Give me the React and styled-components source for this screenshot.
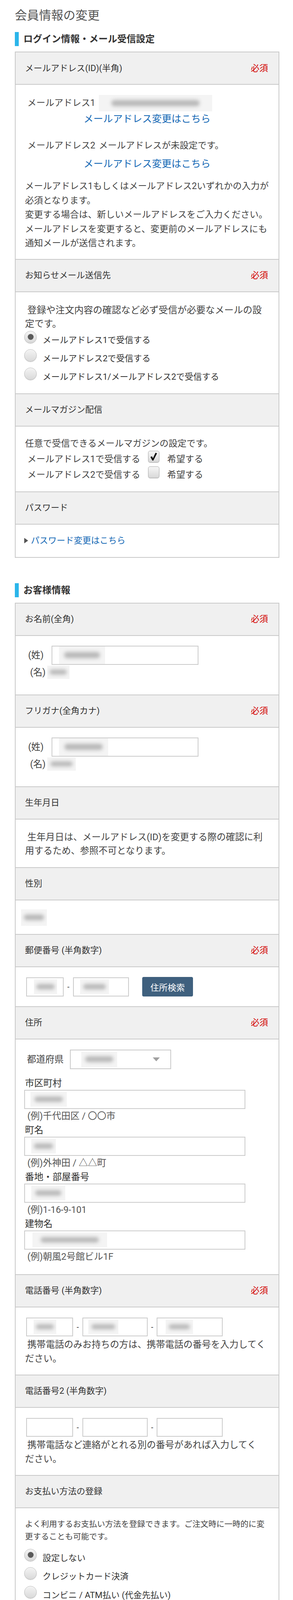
import React from 'react';
import styled, { createGlobalStyle } from 'styled-components';

const GlobalStyle = createGlobalStyle`
  html, body {
    margin: 0;
    padding: 0;
    background: #ffffff;
  }
  body {
    font-family: Roboto, "Noto Sans CJK JP", sans-serif;
    color: #333333;
  }
  * {
    box-sizing: border-box;
  }
`;

const Page = styled.div`
  width: 750px;
  padding: 20px 35px 19px 38px;
`;

const Title = styled.h1`
  margin: 0 0 22px;
  font-size: 31px;
  line-height: 40px;
  font-weight: 400;
  color: #555555;
`;

const SectionHeading = styled.h2`
  margin: ${(p) => (p.$first ? '0' : '65px')} 0 14px;
  padding-left: 12px;
  border-left: 10px solid #2bb5ea;
  font-size: 24px;
  line-height: 36px;
  font-weight: 700;
  color: #333333;
`;

const Card = styled.div`
  border: 2px solid #c9c9c9;
  background: #ffffff;
`;

const Header = styled.div`
  display: flex;
  justify-content: space-between;
  align-items: center;
  height: 85px;
  padding: 0 27px 0 24px;
  background: #f0f0f0;
  border-top: 2px solid #c9c9c9;
  border-bottom: 2px solid #c9c9c9;
  font-size: 22px;
  line-height: 30px;
  color: #333333;
  &:first-child {
    height: 83px;
    border-top: none;
  }
`;

const Required = styled.span`
  color: #d30000;
  font-size: 22px;
`;

const Body = styled.div`
  padding: ${(p) => p.$pad || '25px 12px 22px 24px'};
  font-size: 23px;
  line-height: 36px;
  color: #444444;
`;

const Text = styled.p`
  margin: ${(p) => p.$m || '0'};
  font-size: ${(p) => p.$size || 23}px;
  line-height: ${(p) => p.$lh || 36}px;
  text-indent: ${(p) => (p.$indent ? '6px' : '0')};
  color: #444444;
`;

const EmailRow = styled.div`
  display: flex;
  align-items: center;
  height: ${(p) => p.$h || 40}px;
  margin-top: ${(p) => p.$mt || 0}px;
  padding-left: 6px;
  font-size: 23px;
  color: #444444;
  white-space: nowrap;
`;

const EmailLabel = styled.span`
  margin-right: 9px;
`;

const CenterLink = styled.a`
  display: block;
  margin-top: ${(p) => p.$mt || 0}px;
  padding-right: 12px;
  text-align: center;
  font-size: 25px;
  line-height: 40px;
  color: #1468b5;
  text-decoration: none;
`;

const Blur = styled.span`
  display: inline-flex;
  align-items: center;
  justify-content: center;
  flex: none;
  width: ${(p) => p.$w}px;
  height: ${(p) => p.$h || 40}px;
  margin-left: ${(p) => p.$ml || 0}px;
  background: #f4f4f4;
  overflow: hidden;
  &::after {
    content: '';
    width: 78%;
    height: 36%;
    border-radius: 10px;
    background: #b9b9b9;
    filter: blur(5px);
  }
`;

const RadioList = styled.div`
  margin-top: ${(p) => p.$mt || 0}px;
`;

const RadioRow = styled.label`
  display: flex;
  align-items: flex-start;
  height: ${(p) => p.$h || 47}px;
`;

const RadioMark = styled.span`
  flex: none;
  display: flex;
  align-items: center;
  justify-content: center;
  width: 32px;
  height: 32px;
  margin-left: -2px;
  border-radius: 50%;
  border: 1px solid #b9b9b9;
  background: linear-gradient(#f4f4f4, #d9d9d9);
  box-shadow: inset 0 1px 1px #ffffff, 0 1px 1px rgba(0, 0, 0, 0.15);
  &::after {
    content: '';
    width: 15px;
    height: 15px;
    border-radius: 50%;
    background: ${(p) => (p.$checked ? '#5b5b5b' : 'transparent')};
  }
`;

const RadioLabel = styled.span`
  margin-left: 15px;
  font-size: 22px;
  line-height: 47px;
  color: #333333;
  white-space: pre;
`;

const CheckList = styled.div`
  margin-top: 2px;
`;

const CheckRow = styled.div`
  display: flex;
  align-items: center;
  height: 40px;
  padding-left: 6px;
  font-size: 23px;
  color: #444444;
  white-space: nowrap;
`;

const CheckMark = styled.span`
  flex: none;
  align-self: flex-start;
  display: flex;
  align-items: center;
  justify-content: center;
  width: 29px;
  height: 30px;
  margin: -2px 20px 0 20px;
  border: 1px solid #a9a9a9;
  border-radius: 5px;
  background: linear-gradient(#f6f6f6, #d8d8d8);
  box-shadow: 0 1px 1px rgba(0, 0, 0, 0.15);
`;

const PlainLink = styled.a`
  display: flex;
  align-items: center;
  gap: 7px;
  margin-left: -2px;
  font-size: 22px;
  line-height: 40px;
  color: #1468b5;
  text-decoration: none;
`;

const Triangle = styled.span`
  width: 0;
  height: 0;
  border-top: 7px solid transparent;
  border-bottom: 7px solid transparent;
  border-left: 10px solid #555555;
`;

const InlineRow = styled.div`
  display: flex;
  align-items: center;
  height: ${(p) => p.$h || 49}px;
  padding-left: ${(p) => p.$pl || 0}px;
  white-space: nowrap;
`;

const NameLabel = styled.span`
  flex: none;
  width: ${(p) => (p.$w ? `${p.$w}px` : 'auto')};
  padding-left: ${(p) => p.$pl || 8}px;
  font-size: 23.5px;
  color: #444444;
`;

const InputBox = styled.div`
  flex: none;
  display: flex;
  align-items: center;
  width: ${(p) => p.$w}px;
  height: ${(p) => p.$h || 49}px;
  margin-left: ${(p) => p.$ml || 0}px;
  padding-left: ${(p) => p.$pl || 16}px;
  border: 2px solid #cbcbcb;
  background: #ffffff;
`;

const Dash = styled.span`
  flex: none;
  width: ${(p) => p.$w || 24}px;
  text-align: center;
  font-size: 20px;
  color: #333333;
`;

const SearchButton = styled.button`
  flex: none;
  width: 130px;
  height: 50px;
  margin-left: 34px;
  border: none;
  border-radius: 4px;
  background: #3f607e;
  color: #ffffff;
  font-family: inherit;
  font-size: 22px;
`;

const PrefLabel = styled.span`
  padding-left: 5px;
  margin-right: 16px;
  font-size: 23.5px;
  color: #444444;
`;

const SelectBox = styled.div`
  display: flex;
  align-items: center;
  justify-content: space-between;
  width: 259px;
  height: 50px;
  padding: 0 27px;
  border: 2px solid #c9c9c9;
  background: #ffffff;
`;

const Caret = styled.span`
  width: 0;
  height: 0;
  border-left: 9px solid transparent;
  border-right: 9px solid transparent;
  border-top: 10px solid #a0a0a0;
`;

const AddressFields = styled.div`
  margin-top: 19px;
`;

const FieldLabel = styled.div`
  font-size: 23.5px;
  line-height: 34px;
  color: #333333;
`;

const Example = styled.div`
  padding-left: 6px;
  font-size: 23.5px;
  line-height: 37px;
  color: #555555;
`;

const Highlight = styled.div`
  width: 567px;
  margin: 54px auto 0;
  padding: 6px;
  border: 3px solid #ff0000;
  border-radius: 7px;
`;

const ConfirmButton = styled.button`
  position: relative;
  display: flex;
  align-items: center;
  justify-content: center;
  width: 100%;
  height: 87px;
  border: none;
  border-radius: 11px;
  background: #2db3ea;
  box-shadow: 0 1px 0 #1f9fd6;
  color: #ffffff;
  font-family: inherit;
  font-size: 26px;
  svg {
    position: absolute;
    right: 28px;
    top: 50%;
    transform: translateY(-50%);
  }
`;

const Radio = ({ checked, label, h }) => (
  <RadioRow $h={h}>
    <RadioMark $checked={checked} />
    <RadioLabel>{label}</RadioLabel>
  </RadioRow>
);

const Check = ({ label, checked }) => (
  <CheckRow>
    <span>{label}</span>
    <CheckMark>
      {checked && (
        <svg width="20" height="24" viewBox="0 0 20 24">
          <path d="M2 13 L6 11 L8.5 16 L15 2 L19 3.5 L9.5 22 L7 22 Z" fill="#111111" />
        </svg>
      )}
    </CheckMark>
    <span>希望する</span>
  </CheckRow>
);

const NameBody = ({ sei, mei }) => (
  <Body $pad="25px 12px 38px 24px">
    <InlineRow>
      <NameLabel $w={68}>(姓)</NameLabel>
      <InputBox $w={376} $pl={17}>
        <Blur $w={sei} $h={45} />
      </InputBox>
    </InlineRow>
    <InlineRow $h={38}>
      <NameLabel $pl={13}>(名)</NameLabel>
      <Blur $w={mei} $h={34} $ml={4} />
    </InlineRow>
  </Body>
);

const AddressField = ({ label, blur, pl, example }) => (
  <>
    <FieldLabel>{label}</FieldLabel>
    <InputBox $w={566} $ml={-2} $pl={pl}>
      <Blur $w={blur} $h={38} />
    </InputBox>
    <Example>{example}</Example>
  </>
);

const TelRow = ({ blurs }) => (
  <InlineRow $h={48} $pl={3}>
    <InputBox $w={120} $h={48} $pl={17}>
      {blurs && <Blur $w={58} $h={37} />}
    </InputBox>
    <Dash>-</Dash>
    <InputBox $w={167} $h={48} $pl={13}>
      {blurs && <Blur $w={77} $h={37} />}
    </InputBox>
    <Dash $w={23}>-</Dash>
    <InputBox $w={169} $h={48} $pl={21}>
      {blurs && <Blur $w={70} $h={37} />}
    </InputBox>
  </InlineRow>
);

const App = () => (
  <Page>
    <GlobalStyle />
    <Title>会員情報の変更</Title>

    <SectionHeading $first>ログイン情報・メール受信設定</SectionHeading>
    <Card>
      <Header>
        <span>メールアドレス(ID)(半角)</span>
        <Required>必須</Required>
      </Header>
      <Body $pad="26px 12px 21px 24px">
        <EmailRow $h={42}>
          <EmailLabel>メールアドレス1</EmailLabel>
          <Blur $w={290} $h={42} />
        </EmailRow>
        <CenterLink href="#mail1">メールアドレス変更はこちら</CenterLink>
        <EmailRow $mt={28}>
          <EmailLabel>メールアドレス2</EmailLabel>
          メールアドレスが未設定です。
        </EmailRow>
        <CenterLink href="#mail2" $mt={7}>
          メールアドレス変更はこちら
        </CenterLink>
        <Text $m="19px 0 0" $lh={36.5}>
          メールアドレス1もしくはメールアドレス2いずれかの入力が
          <br />
          必須となります。
          <br />
          変更する場合は、新しいメールアドレスをご入力ください。
          <br />
          メールアドレスを変更すると、変更前のメールアドレスにも
          <br />
          通知メールが送信されます。
        </Text>
      </Body>

      <Header>
        <span>お知らせメール送信先</span>
        <Required>必須</Required>
      </Header>
      <Body $pad="29px 12px 19px 24px">
        <Text $size={24} $lh={35} $indent>
          登録や注文内容の確認など必ず受信が必要なメールの設
          <br />
          定です。
        </Text>
        <RadioList>
          <Radio checked label="メールアドレス1で受信する" />
          <Radio label="メールアドレス2で受信する" />
          <Radio label="メールアドレス1/メールアドレス2で受信する" />
        </RadioList>
      </Body>

      <Header>メールマガジン配信</Header>
      <Body $pad="26px 12px 22px 24px">
        <Text $lh={36}>任意で受信できるメールマガジンの設定です。</Text>
        <CheckList>
          <Check checked label="メールアドレス1で受信する" />
          <Check label="メールアドレス2で受信する" />
        </CheckList>
      </Body>

      <Header>パスワード</Header>
      <Body $pad="21px 12px 22px 24px">
        <PlainLink href="#password">
          <Triangle />
          パスワード変更はこちら
        </PlainLink>
      </Body>
    </Card>

    <SectionHeading>お客様情報</SectionHeading>
    <Card>
      <Header>
        <span>お名前(全角)</span>
        <Required>必須</Required>
      </Header>
      <NameBody sei={118} mei={57} />

      <Header>
        <span>フリガナ(全角カナ)</span>
        <Required>必須</Required>
      </Header>
      <NameBody sei={126} mei={73} />

      <Header>生年月日</Header>
      <Body $pad="28px 12px 24px 24px">
        <Text $size={23.5} $lh={35} $indent>
          生年月日は、メールアドレス(ID)を変更する際の確認に利
          <br />
          用するため、参照不可となります。
        </Text>
      </Body>

      <Header>性別</Header>
      <Body $pad="23px 12px 21px 24px">
        <InlineRow $h={42}>
          <Blur $w={66} $h={42} $ml={-10} />
        </InlineRow>
      </Body>

      <Header>
        <span>郵便番号 (半角数字)</span>
        <Required>必須</Required>
      </Header>
      <Body $pad="26px 12px 25px 24px">
        <InlineRow $pl={3}>
          <InputBox $w={96} $pl={18}>
            <Blur $w={59} $h={38} />
          </InputBox>
          <Dash>-</Dash>
          <InputBox $w={143} $pl={16}>
            <Blur $w={74} $h={38} />
          </InputBox>
          <SearchButton type="button">住所検索</SearchButton>
        </InlineRow>
      </Body>

      <Header>
        <span>住所</span>
        <Required>必須</Required>
      </Header>
      <Body $pad="26px 12px 26px 24px">
        <InlineRow $h={50}>
          <PrefLabel>都道府県</PrefLabel>
          <SelectBox>
            <Blur $w={92} $h={40} />
            <Caret />
          </SelectBox>
        </InlineRow>
        <AddressFields>
          <AddressField label="市区町村" blur={93} pl={14} example="(例)千代田区 / 〇〇市" />
          <AddressField label="町名" blur={63} pl={16} example="(例)外神田 / △△町" />
          <AddressField label="番地・部屋番号" blur={87} pl={16} example="(例)1-16-9-101" />
          <AddressField label="建物名" blur={191} pl={19} example="(例)朝風2号館ビル1F" />
        </AddressFields>
      </Body>

      <Header>
        <span>電話番号 (半角数字)</span>
        <Required>必須</Required>
      </Header>
      <Body $pad="26px 12px 23px 24px">
        <TelRow blurs />
        <Text $m="3px 0 0" $size={23.5} $lh={36} $indent>
          携帯電話のみお持ちの方は、携帯電話の番号を入力してく
          <br />
          ださい。
        </Text>
      </Body>

      <Header>電話番号2 (半角数字)</Header>
      <Body $pad="26px 12px 23px 24px">
        <TelRow />
        <Text $m="3px 0 0" $size={23.5} $lh={36} $indent>
          携帯電話など連絡がとれる別の番号があれば入力してく
          <br />
          ださい。
        </Text>
      </Body>

      <Header>お支払い方法の登録</Header>
      <Body $pad="25px 12px 15px 24px">
        <Text $size={20.5} $lh={32}>
          よく利用するお支払い方法を登録できます。ご注文時に一時的に変
          <br />
          更することも可能です。
        </Text>
        <RadioList $mt={15}>
          <Radio checked h={47.5} label="設定しない" />
          <Radio h={47.5} label="クレジットカード決済" />
          <Radio h={47.5} label="コンビニ / ATM払い (代金先払い)" />
          <Radio h={47.5} label="銀行振込 / ゆうちょ振替　(代金先払い)" />
          <Radio h={47.5} label="代金引換 (代金着払い)" />
        </RadioList>
      </Body>
    </Card>

    <Highlight>
      <ConfirmButton type="button">
        確認画面へ
        <svg width="14" height="28" viewBox="0 0 14 28">
          <polyline points="2,2 12,14 2,26" fill="none" stroke="#ffffff" strokeWidth="2" />
        </svg>
      </ConfirmButton>
    </Highlight>
  </Page>
);

export default App;
